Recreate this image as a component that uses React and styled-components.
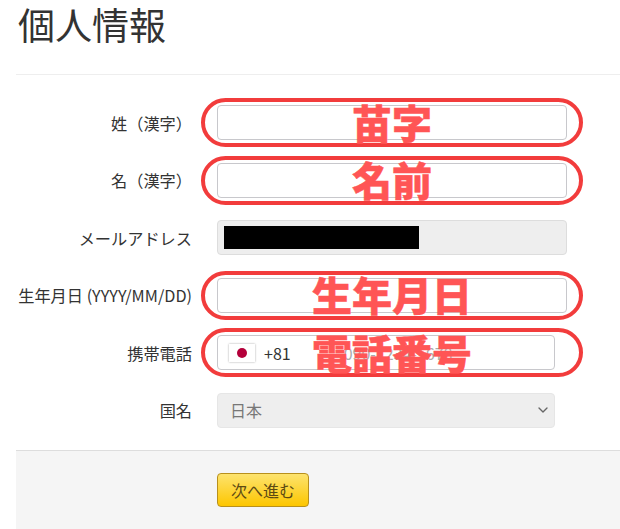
import React from 'react';
import styled, { createGlobalStyle } from 'styled-components';
import { ChevronDown } from 'lucide-react';

const GlobalStyle = createGlobalStyle`
body {
    margin: 0;
    background: #fff;
    color: #333;
    font-family: "Noto Sans CJK JP", "Noto Sans", sans-serif;
}
`;

const rows = [
    { label: '姓（漢字）', note: '苗字' },
    { label: '名（漢字）', note: '名前' },
    { label: 'メールアドレス', redacted: true },
    { label: '生年月日 (YYYY/MM/DD)', note: '生年月日' },
];

const App = () => {
    return (
        <Page>
            <GlobalStyle />
            <Title>個人情報</Title>
            <Form>
                {rows.map((row) => (
                    <Row key={row.label}>
                        <Label>{row.label}</Label>
                        <Field>
                            <TextInput disabled={row.redacted} />
                            {row.redacted && <Redaction />}
                            {row.note && <Ring><Note>{row.note}</Note></Ring>}
                        </Field>
                    </Row>
                ))}
                <Row>
                    <Label>携帯電話</Label>
                    <Field $short>
                        <PhoneBox>
                            <Flag><Dot /></Flag>
                            <Code>+81</Code>
                            <Placeholder>090-1234-5678</Placeholder>
                        </PhoneBox>
                        <Ring $wide><Note>電話番号</Note></Ring>
                    </Field>
                </Row>
                <Row>
                    <Label>国名</Label>
                    <Field $short>
                        <SelectBox>
                            <span>日本</span>
                            <ChevronDown size={16} strokeWidth={2} color="#666" />
                        </SelectBox>
                    </Field>
                </Row>
            </Form>
            <Footer>
                <NextButton>次へ進む</NextButton>
            </Footer>
        </Page>
    )
};

export default App;

const Page = styled.div`
width: 620px;
height: 529px;
overflow: hidden;
padding-left: 16px;
box-sizing: border-box;
`;

const Title = styled.h1`
margin: 0;
padding: 0 0 0 2px;
height: 75px;
box-sizing: border-box;
border-bottom: 1px solid #eee;
font-size: 37px;
font-weight: 400;
line-height: 48px;
color: #333;
`;

const Form = styled.div`
display: flex;
flex-direction: column;
gap: 22.6px;
padding-top: 30px;
height: 375px;
box-sizing: border-box;
`;

const Row = styled.div`
display: flex;
align-items: center;
gap: 25px;
height: 35px;
`;

const Label = styled.div`
width: 176px;
text-align: right;
font-size: 16.2px;
white-space: nowrap;
color: #333;
`;

const Field = styled.div`
position: relative;
width: ${(p) => (p.$short ? '338px' : '350px')};
height: 35px;
`;

const TextInput = styled.input`
display: block;
width: 100%;
height: 100%;
box-sizing: border-box;
border: 1px solid #c8c8cc;
border-radius: 4px;
background: #fff;
padding: 0 12px;

&:disabled {
    background: #eee;
    border-color: #ddd;
}
`;

const Redaction = styled.div`
position: absolute;
left: 7px;
top: 6px;
width: 195px;
height: 23px;
background: #000;
`;

const Ring = styled.div`
position: absolute;
top: -7px;
bottom: -7px;
left: -16px;
right: ${(p) => (p.$wide ? '-28px' : '-16px')};
border: 4px solid #f23c3c;
border-radius: 25px;
display: flex;
align-items: center;
justify-content: center;
`;

const Note = styled.div`
font-size: 40px;
font-weight: 900;
line-height: 1;
margin-bottom: 2px;
color: #ff5555;
-webkit-text-stroke: 0.5px #ff5555;
white-space: nowrap;
`;

const PhoneBox = styled.div`
display: flex;
align-items: center;
height: 100%;
box-sizing: border-box;
border: 1px solid #c8c8cc;
border-radius: 4px;
background: #fff;
padding-left: 10px;
`;

const Flag = styled.div`
display: flex;
align-items: center;
justify-content: center;
width: 26px;
height: 18px;
margin-left: 1px;
background: #fff;
box-shadow: 0 0 2px rgba(0, 0, 0, 0.35);
`;

const Dot = styled.div`
width: 10px;
height: 10px;
border-radius: 50%;
background: #b4003a;
`;

const Code = styled.span`
font-size: 16px;
margin-left: 9px;
color: #333;
`;

const Placeholder = styled.span`
font-size: 16px;
margin-left: 53px;
color: #aaa;
`;

const SelectBox = styled.div`
display: flex;
align-items: center;
justify-content: space-between;
height: 100%;
box-sizing: border-box;
border: 1px solid #e6e6e6;
border-radius: 4px;
background: #eee;
padding: 0 3px 0 12px;
font-size: 16px;
color: #777;
`;

const Footer = styled.div`
height: 79px;
box-sizing: border-box;
border-top: 1px solid #ddd;
background: #f5f5f5;
padding: 22px 0 0 201px;
`;

const NextButton = styled.button`
display: block;
width: 92px;
height: 34px;
border: 1px solid #b8901c;
border-radius: 4px;
background: linear-gradient(#fde36e, #fdc600);
font-family: inherit;
font-size: 16px;
color: #5c4a14;
padding: 0;
`;
